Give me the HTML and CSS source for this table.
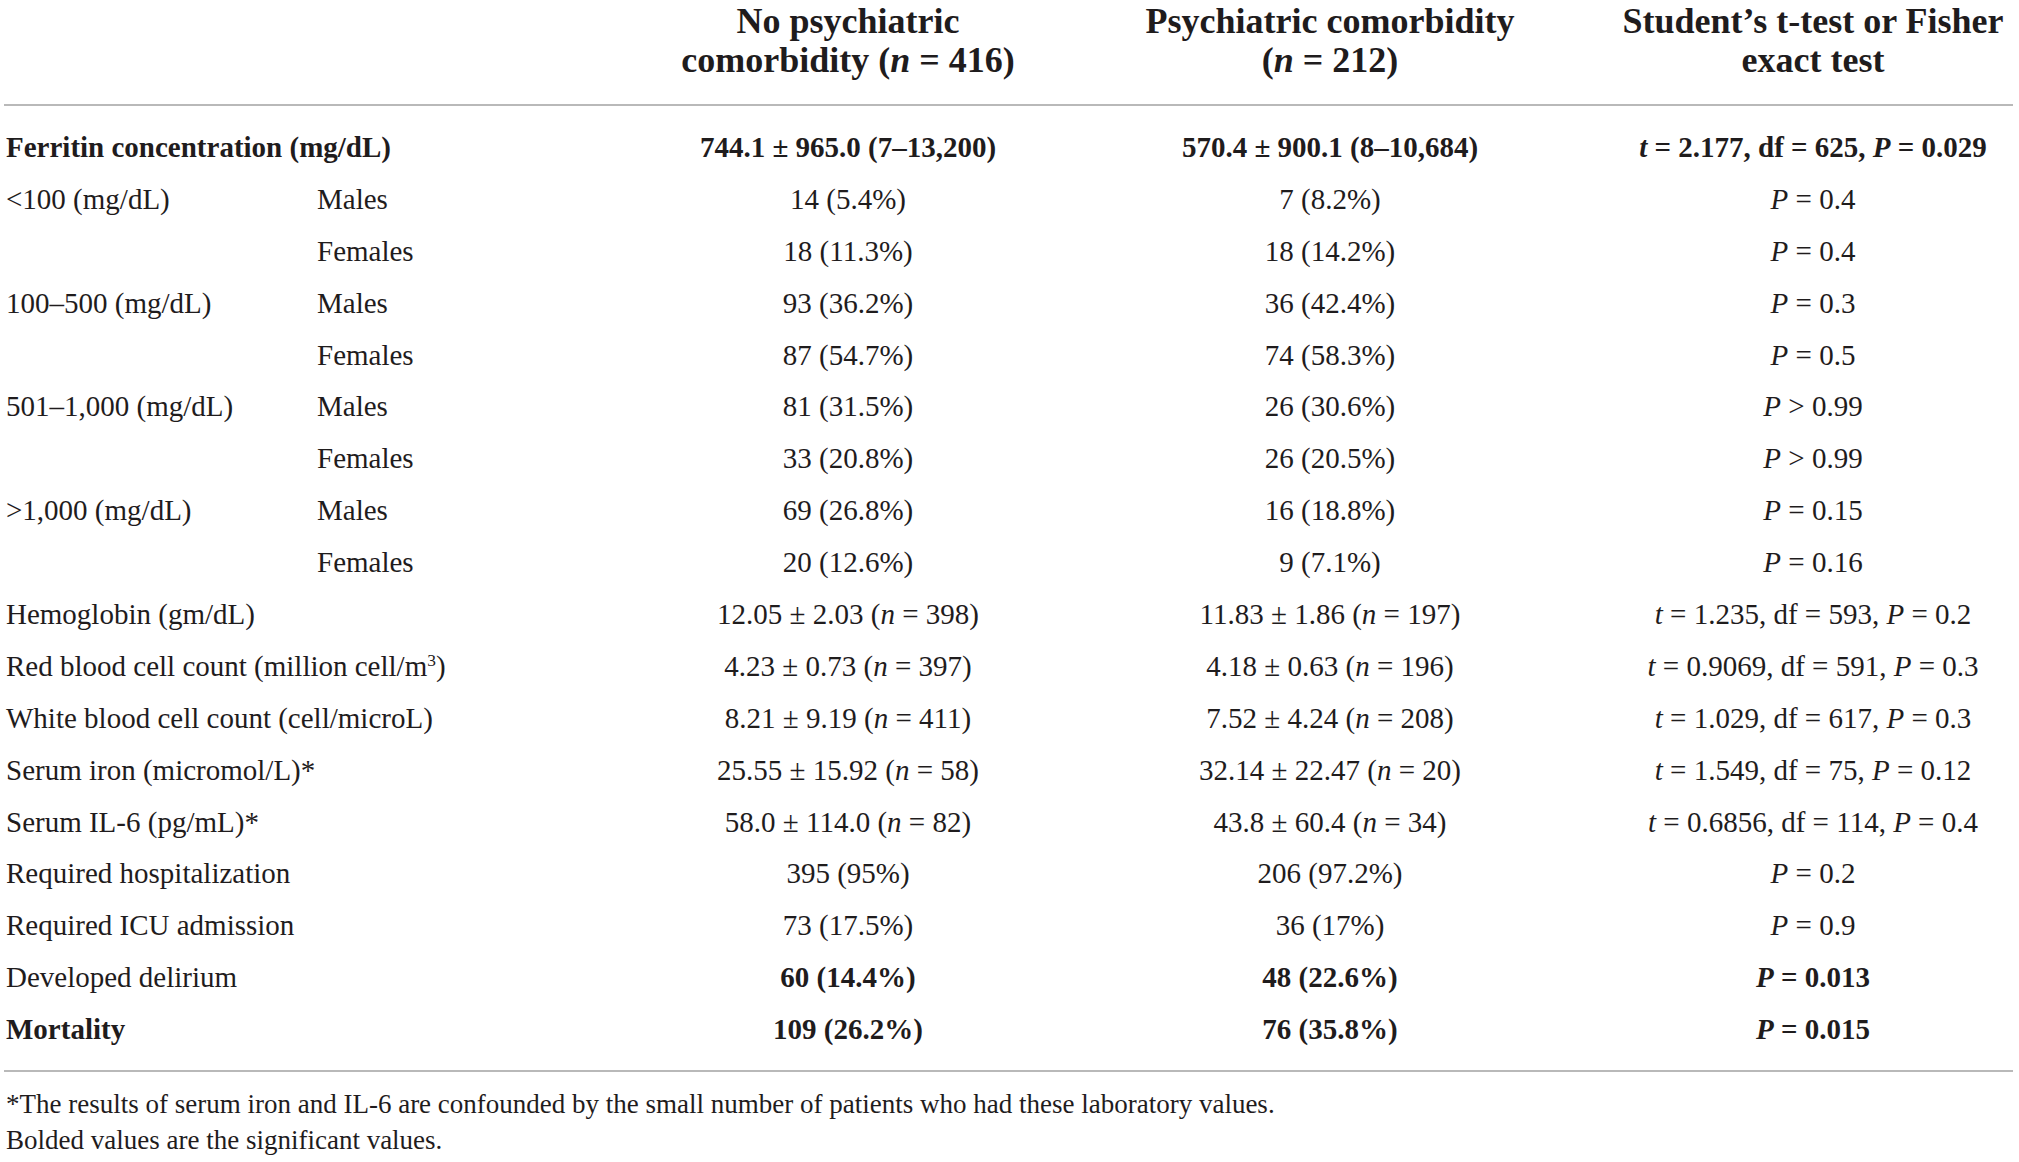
FILE: index.html
```html
<!DOCTYPE html>
<html lang="en">
<head>
<meta charset="utf-8">
<title>Ferritin and psychiatric comorbidity</title>
<link rel="stylesheet" href="styles.css">
</head>
<body>
<div class="wrap">
<table class="data">
  <colgroup>
    <col class="c1"><col class="c2"><col class="c3"><col class="c4"><col class="c5">
  </colgroup>
  <thead>
    <tr>
      <th colspan="2"></th>
      <th>No psychiatric<br>comorbidity (<i>n</i> = 416)</th>
      <th>Psychiatric comorbidity<br>(<i>n</i> = 212)</th>
      <th>Student’s t-test or Fisher<br>exact test</th>
    </tr>
  </thead>
  <tbody>
    <tr class="b">
      <td colspan="2">Ferritin concentration (mg/dL)</td>
      <td class="n">744.1 ± 965.0 (7–13,200)</td>
      <td class="n">570.4 ± 900.1 (8–10,684)</td>
      <td class="n"><i>t</i> = 2.177, df = 625, <i>P</i> = 0.029</td>
    </tr>
    <tr>
      <td>&lt;100 (mg/dL)</td><td>Males</td>
      <td class="n">14 (5.4%)</td><td class="n">7 (8.2%)</td><td class="n"><i>P</i> = 0.4</td>
    </tr>
    <tr>
      <td></td><td>Females</td>
      <td class="n">18 (11.3%)</td><td class="n">18 (14.2%)</td><td class="n"><i>P</i> = 0.4</td>
    </tr>
    <tr>
      <td>100–500 (mg/dL)</td><td>Males</td>
      <td class="n">93 (36.2%)</td><td class="n">36 (42.4%)</td><td class="n"><i>P</i> = 0.3</td>
    </tr>
    <tr>
      <td></td><td>Females</td>
      <td class="n">87 (54.7%)</td><td class="n">74 (58.3%)</td><td class="n"><i>P</i> = 0.5</td>
    </tr>
    <tr>
      <td>501–1,000 (mg/dL)</td><td>Males</td>
      <td class="n">81 (31.5%)</td><td class="n">26 (30.6%)</td><td class="n"><i>P</i> &gt; 0.99</td>
    </tr>
    <tr>
      <td></td><td>Females</td>
      <td class="n">33 (20.8%)</td><td class="n">26 (20.5%)</td><td class="n"><i>P</i> &gt; 0.99</td>
    </tr>
    <tr>
      <td>&gt;1,000 (mg/dL)</td><td>Males</td>
      <td class="n">69 (26.8%)</td><td class="n">16 (18.8%)</td><td class="n"><i>P</i> = 0.15</td>
    </tr>
    <tr>
      <td></td><td>Females</td>
      <td class="n">20 (12.6%)</td><td class="n">9 (7.1%)</td><td class="n"><i>P</i> = 0.16</td>
    </tr>
    <tr>
      <td colspan="2">Hemoglobin (gm/dL)</td>
      <td class="n">12.05 ± 2.03 (<i>n</i> = 398)</td>
      <td class="n">11.83 ± 1.86 (<i>n</i> = 197)</td>
      <td class="n"><i>t</i> = 1.235, df = 593, <i>P</i> = 0.2</td>
    </tr>
    <tr>
      <td colspan="2">Red blood cell count (million cell/m<sup>3</sup>)</td>
      <td class="n">4.23 ± 0.73 (<i>n</i> = 397)</td>
      <td class="n">4.18 ± 0.63 (<i>n</i> = 196)</td>
      <td class="n"><i>t</i> = 0.9069, df = 591, <i>P</i> = 0.3</td>
    </tr>
    <tr>
      <td colspan="2">White blood cell count (cell/microL)</td>
      <td class="n">8.21 ± 9.19 (<i>n</i> = 411)</td>
      <td class="n">7.52 ± 4.24 (<i>n</i> = 208)</td>
      <td class="n"><i>t</i> = 1.029, df = 617, <i>P</i> = 0.3</td>
    </tr>
    <tr>
      <td colspan="2">Serum iron (micromol/L)*</td>
      <td class="n">25.55 ± 15.92 (<i>n</i> = 58)</td>
      <td class="n">32.14 ± 22.47 (<i>n</i> = 20)</td>
      <td class="n"><i>t</i> = 1.549, df = 75, <i>P</i> = 0.12</td>
    </tr>
    <tr>
      <td colspan="2">Serum IL-6 (pg/mL)*</td>
      <td class="n">58.0 ± 114.0 (<i>n</i> = 82)</td>
      <td class="n">43.8 ± 60.4 (<i>n</i> = 34)</td>
      <td class="n"><i>t</i> = 0.6856, df = 114, <i>P</i> = 0.4</td>
    </tr>
    <tr>
      <td colspan="2">Required hospitalization</td>
      <td class="n">395 (95%)</td><td class="n">206 (97.2%)</td><td class="n"><i>P</i> = 0.2</td>
    </tr>
    <tr>
      <td colspan="2">Required ICU admission</td>
      <td class="n">73 (17.5%)</td><td class="n">36 (17%)</td><td class="n"><i>P</i> = 0.9</td>
    </tr>
    <tr>
      <td colspan="2">Developed delirium</td>
      <td class="n"><b>60 (14.4%)</b></td><td class="n"><b>48 (22.6%)</b></td><td class="n"><b><i>P</i> = 0.013</b></td>
    </tr>
    <tr class="b">
      <td colspan="2">Mortality</td>
      <td class="n">109 (26.2%)</td><td class="n">76 (35.8%)</td><td class="n"><i>P</i> = 0.015</td>
    </tr>
  </tbody>
</table>
<div class="notes">
  <p>*The results of serum iron and IL-6 are confounded by the small number of patients who had these laboratory values.</p>
  <p>Bolded values are the significant values.</p>
</div>
</div>
</body>
</html>
```

FILE: styles.css
```css
html, body {
  margin: 0;
  padding: 0;
  background: #ffffff;
}

body {
  font-family: "Liberation Serif", "Times New Roman", serif;
  color: #1f1c1d;
}

.wrap {
  padding: 0 6px 0 4px;
}

.data {
  width: 2009px;
  border-collapse: collapse;
  table-layout: fixed;
  font-size: 29px;
}

.c1 { width: 311px; }
.c2 { width: 334px; }
.c3 { width: 398px; }
.c4 { width: 566px; }
.c5 { width: 400px; }

.data thead th {
  font-size: 36px;
  font-weight: bold;
  line-height: 39px;
  text-align: center;
  padding: 2px 0 24px;
  border-bottom: 2px solid #b9b9b9;
  vertical-align: top;
  white-space: nowrap;
}

.data thead th i {
  font-style: italic;
}

.data td {
  height: 51.9px;
  padding: 0 0 0 2px;
  line-height: 30px;
  vertical-align: middle;
  white-space: nowrap;
}

.data td.n {
  text-align: center;
  padding-left: 0;
}

.data tbody tr:first-child td {
  padding-top: 15px;
}

.data tbody tr:last-child td {
  padding-bottom: 15px;
  border-bottom: 2px solid #b9b9b9;
}

.data tr.b td {
  font-weight: bold;
}

.data sup {
  font-size: 0.6em;
  line-height: 0;
  vertical-align: 0.6em;
}

.notes {
  padding: 14px 0 0 2px;
  font-size: 27px;
  line-height: 36px;
}

.notes p {
  margin: 0;
}
```
